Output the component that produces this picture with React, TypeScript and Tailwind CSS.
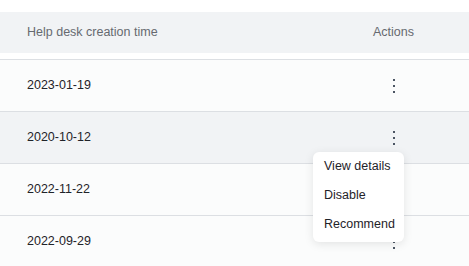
import React from 'react';

const rows = ['2023-01-19', '2020-10-12', '2022-11-22', '2022-09-29'];

function Kebab() {
  return (
    <svg width="4" height="16" viewBox="0 0 4 16" className="block">
      <rect x="1" y="1" width="2" height="2" fill="#4b5563" />
      <rect x="1" y="7" width="2" height="2" fill="#4b5563" />
      <rect x="1" y="13" width="2" height="2" fill="#4b5563" />
    </svg>
  );
}

export default function App() {
  return (
    <div
      className="relative w-[469px] h-[266px] overflow-hidden bg-white text-[12.5px]"
      style={{ fontFamily: '"Liberation Sans", Arial, sans-serif' }}
    >
      <div className="pt-[12px]">
        <div className="flex items-center h-[41px] bg-[#f1f3f5] text-[#666a70]">
          <div className="flex-1 pl-[27px]">Help desk creation time</div>
          <div className="w-[152px] pl-[56px]">Actions</div>
        </div>
      </div>
      <div className="h-[7px] border-b border-[#dcdfe3]" />
      {rows.map((d, i) => (
        <div
          key={d}
          className={`flex items-center h-[52px] border-b border-[#dcdfe3] text-[#1f2329] ${
            i === 1 ? 'bg-[#f1f3f5]' : 'bg-[#fbfcfc]'
          }`}
        >
          <div className="flex-1 pl-[27px]">{d}</div>
          <div className="w-[152px] pl-[75px]">
            <Kebab />
          </div>
        </div>
      ))}
      <div className="absolute left-[313px] top-[152px] w-[91px] h-[90px] rounded-[6px] bg-white shadow-[0_2px_10px_rgba(0,0,0,0.10)] text-[#1f2329]">
        <div className="h-[29px] flex items-center pl-[11px]">View details</div>
        <div className="h-[29px] flex items-center pl-[11px]">Disable</div>
        <div className="h-[29px] flex items-center pl-[11px]">Recommend</div>
      </div>
    </div>
  );
}
